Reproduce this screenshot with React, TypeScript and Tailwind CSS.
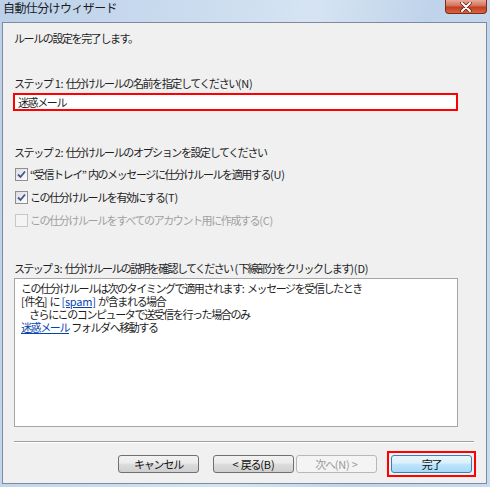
import React from "react";

const font = { fontFamily: '"Noto Sans CJK JP", "Noto Sans", sans-serif' };

function T({ s }: { s: string }) {
  const parts = s.match(/[\x20-\x7e]+|[^\x20-\x7e]+/g) || [];
  return (
    <>
      {parts.map((p, i) =>
        /^[\x20-\x7e]+$/.test(p) ? (
          <span key={i} className="tracking-[-0.2px] whitespace-pre">
            {p}
          </span>
        ) : (
          <span key={i}>{p}</span>
        )
      )}
    </>
  );
}

function Check({ checked, disabled }: { checked?: boolean; disabled?: boolean }) {
  return (
    <div
      className={
        "w-[13px] h-[13px] border flex items-center justify-center shrink-0 " +
        (disabled ? "border-[#c8c8c8] bg-[#f4f4f4]" : "border-[#8e8f8f] bg-gradient-to-br from-[#dcdcdc] to-[#ffffff]")
      }
    >
      {checked && (
        <svg width="9" height="9" viewBox="0 0 9 9">
          <path d="M1 4.5 L3.5 7 L8 1.5" stroke="#3d5590" strokeWidth="1.8" fill="none" />
        </svg>
      )}
    </div>
  );
}

function Btn({ label, kind }: { label: string; kind?: "default" | "disabled" }) {
  const cls =
    kind === "default"
      ? "border-[#3c7fb1] bg-[linear-gradient(#eaf6fd_0%,#d9f0fc_45%,#bee6fd_50%,#a7d9f5_100%)] text-[#111]"
      : kind === "disabled"
      ? "border-[#b5b9bc] bg-[#f4f4f4] text-[#9a9a9a]"
      : "border-[#707070] bg-[linear-gradient(#f2f2f2_0%,#ebebeb_45%,#dddddd_50%,#cfcfcf_100%)] text-[#111]";
  return (
    <div
      className={
        "w-[81px] h-[18px] border rounded-[3px] flex items-center justify-center text-[11px] tracking-[-1.2px] leading-none " +
        cls
      }
    >
      <T s={label} />
    </div>
  );
}

export default function App() {
  return (
    <div
      className="w-[490px] h-[487px] flex flex-col bg-[linear-gradient(100deg,#bcd1e9_0%,#cbdcef_35%,#d6e4f2_55%,#bfd3ea_75%,#c9dbee_100%)] text-[#1e1e1e] overflow-hidden"
      style={font}
    >
      {/* title bar */}
      <div className="h-[22px] flex items-start justify-between shrink-0">
        <div className="pl-[3px] pt-[1px] text-[12px] leading-[14px] tracking-[-0.6px] text-[#1b1b1b]">
          自動仕分けウィザード
        </div>
        <div className="mr-[3px] w-[42px] h-[14px] rounded-b-[4px] border border-t-0 border-[#7d2a1a] bg-[linear-gradient(#e9a99a_0%,#d5705a_45%,#c13f22_55%,#d8643f_100%)] flex items-center justify-center">
          <svg width="14" height="10" viewBox="0 0 14 10">
            <path d="M3 1 L11 9 M11 1 L3 9" stroke="#5a1a10" strokeWidth="3.4" strokeLinecap="round" />
            <path d="M3 1 L11 9 M11 1 L3 9" stroke="#ffffff" strokeWidth="2" strokeLinecap="round" />
          </svg>
        </div>
      </div>

      {/* panel */}
      <div className="flex-1 ml-[2px] mr-[3px] mb-[3px] border border-[#7c8c9e] bg-[#f0f0f0] flex flex-col text-[11px] tracking-[-1.4px] leading-[14px]">
        <div className="pl-[11px] mt-[8px]">ルールの設定を完了します。</div>

        <div className="pl-[11px] mt-[31px]">
          <T s="ステップ 1: 仕分けルールの名前を指定してください(N)" />
        </div>
        <div className="ml-[10px] mt-[3px] w-[445px] h-[18px] border-2 border-[#ff0000] bg-white flex items-center pl-[3px]">
          迷惑メール
        </div>

        <div className="pl-[11px] mt-[34px]">
          <T s="ステップ 2: 仕分けルールのオプションを設定してください" />
        </div>
        <div className="pl-[12px] mt-[7px] flex items-center gap-[2px] h-[16px]">
          <Check checked />
          <span>
            <T s="“受信トレイ” 内のメッセージに仕分けルールを適用する(U)" />
          </span>
        </div>
        <div className="pl-[12px] mt-[7px] flex items-center gap-[2px] h-[16px]">
          <Check checked />
          <span>
            <T s="この仕分けルールを有効にする(T)" />
          </span>
        </div>
        <div className="pl-[12px] mt-[7px] flex items-center gap-[2px] h-[16px] text-[#a0a0a0]">
          <Check disabled />
          <span>
            <T s="この仕分けルールをすべてのアカウント用に作成する(C)" />
          </span>
        </div>

        <div className="pl-[11px] mt-[33px] tracking-[-1.65px]">
          <T s="ステップ 3: 仕分けルールの説明を確認してください (下線部分をクリックします)(D)" />
        </div>
        <div className="ml-[11px] mt-[3px] w-[444px] h-[149px] border border-[#a5a5a5] bg-white pl-[6px] pt-[3px] leading-[13px]">
          <div>
            <T s="この仕分けルールは次のタイミングで適用されます: メッセージを受信したとき" />
          </div>
          <div>
            <T s="[件名] に " />
            <span className="text-[#0645ad] underline">
              <T s="[spam]" />
            </span>
            <T s=" が含まれる場合" />
          </div>
          <div className="pl-[8px]">さらにこのコンピュータで送受信を行った場合のみ</div>
          <div>
            <span className="text-[#0645ad] underline">迷惑メール</span>
            <T s=" フォルダへ移動する" />
          </div>
        </div>

        <div className="ml-[11px] mt-[14px] w-[460px] h-[2px] border-t border-[#a0a0a0] border-b border-b-white" />

        <div className="flex items-center justify-end mt-[8px] pr-[10px]">
          <Btn label="キャンセル" />
          <div className="ml-[14px]">
            <Btn label="< 戻る(B)" />
          </div>
          <div className="ml-[2px]">
            <Btn label="次へ(N) >" kind="disabled" />
          </div>
          <div className="ml-[10px] p-[2px] border-2 border-[#ff0000]">
            <Btn label="完了" kind="default" />
          </div>
        </div>
      </div>
    </div>
  );
}
